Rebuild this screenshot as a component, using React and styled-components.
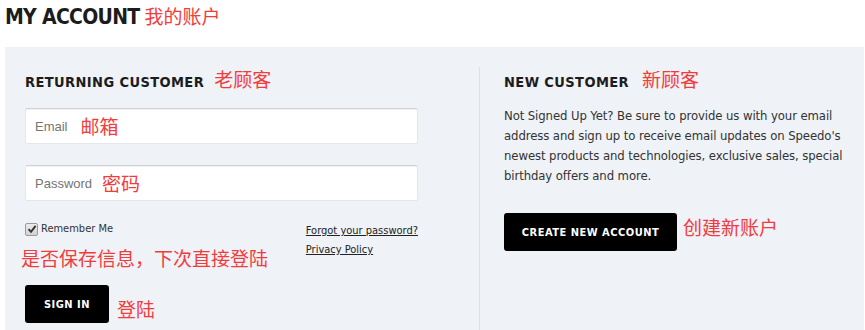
import React from "react";
import styled, { createGlobalStyle } from "styled-components";

const GlobalStyle = createGlobalStyle`
    html, body {
        margin: 0;
        padding: 0;
        background: #ffffff;
    }
    body {
        font-family: "DejaVu Sans Condensed", "Liberation Sans", sans-serif;
        color: #222222;
    }
`;

const narrow = `"DejaVu Sans Condensed", "Liberation Sans", sans-serif`;

// #region Styles

const Page = styled.div`
    padding: 0 1px 0 5px;
`;

const TitleRow = styled.div`
    display: flex;
    align-items: baseline;
    padding-top: 4px;
    margin-bottom: 17px;
    h1 {
        margin: 0;
        font-family: ${narrow};
        font-size: 21px;
        line-height: 26px;
        font-weight: 700;
        letter-spacing: -0.7px;
        color: #1c1c1c;
    }
`;

const Note = styled.span`
    font-family: "Noto Sans CJK SC", sans-serif;
    font-size: 19px;
    line-height: 24px;
    font-weight: 400;
    color: #f23c3c;
    white-space: nowrap;
    margin-left: ${(p) => p.$gap || 0}px;
`;

const Panel = styled.div`
    display: grid;
    grid-template-columns: 474px 1fr;
    background-color: #eff2f7;
    padding-top: 20px;
    min-height: 263px;
`;

const LeftCol = styled.div`
    padding: 0 61px 0 20px;
`;

const RightCol = styled.div`
    border-left: 1px solid #dde1e6;
    padding-left: 24px;
`;

const Heading = styled.div`
    display: flex;
    align-items: baseline;
    height: 20px;
    h2 {
        margin: 0;
        font-family: ${narrow};
        font-size: 14.5px;
        line-height: 20px;
        font-weight: 700;
        letter-spacing: 0.4px;
        color: #1c1c1c;
    }
`;

const Field = styled.div`
    display: flex;
    align-items: center;
    height: 36px;
    box-sizing: border-box;
    margin-top: ${(p) => p.$top}px;
    padding-left: 9px;
    background: #ffffff;
    border: 1px solid #e3e6ea;
    border-top-color: #cfd3d8;
    border-radius: 2px;
    box-shadow: inset 0 1px 1px rgba(0, 0, 0, 0.06);
`;

const Placeholder = styled.span`
    font-family: "Liberation Sans", Arial, sans-serif;
    font-size: 13px;
    color: #747474;
`;

const Options = styled.div`
    display: flex;
    justify-content: space-between;
    align-items: flex-start;
    margin-top: 20px;
`;

const RememberBlock = styled.div`
    display: flex;
    flex-direction: column;
`;

const Remember = styled.label`
    display: flex;
    align-items: center;
    gap: 3px;
    font-size: 11px;
    line-height: 16px;
    color: #333333;
`;

const CheckBox = styled.span`
    display: inline-flex;
    align-items: center;
    justify-content: center;
    width: 13px;
    height: 13px;
    box-sizing: border-box;
    border: 1px solid #9a9a9a;
    border-radius: 2px;
    background: linear-gradient(#ececec, #d2d2d2);
`;

const NoteLine = styled(Note)`
    display: block;
    margin: 9px 0 0 -4px;
`;

const Links = styled.div`
    display: flex;
    flex-direction: column;
    a {
        font-size: 11px;
        line-height: 19px;
        color: #222222;
        text-decoration: underline;
    }
`;

const ButtonRow = styled.div`
    display: flex;
    align-items: ${(p) => p.$align || "flex-end"};
    margin-top: ${(p) => p.$top}px;
    ${Note} {
        margin-top: ${(p) => (p.$align === "flex-start" ? 2 : 0)}px;
        margin-bottom: ${(p) => (p.$align === "flex-start" ? 0 : 2)}px;
    }
`;

const DarkButton = styled.button`
    height: 38px;
    width: ${(p) => p.$width}px;
    background: #000000;
    color: #ffffff;
    border: 0;
    border-radius: 3px;
    padding: 0;
    font-family: ${narrow};
    font-size: 11px;
    font-weight: 700;
    letter-spacing: 0.5px;
`;

const Paragraph = styled.p`
    margin: 19px 0 0 0;
    font-size: 13px;
    line-height: 20px;
    letter-spacing: -0.1px;
    color: #333333;
`;

// #endregion Styles

export default function App() {
    return (
        <>
            <GlobalStyle />
            <Page>
                <TitleRow>
                    <h1>MY ACCOUNT</h1>
                    <Note $gap={5}>我的账户</Note>
                </TitleRow>

                <Panel>
                    <LeftCol>
                        <Heading>
                            <h2>RETURNING CUSTOMER</h2>
                            <Note $gap={10}>老顾客</Note>
                        </Heading>

                        <Field $top={21}>
                            <Placeholder>Email</Placeholder>
                            <Note $gap={13}>邮箱</Note>
                        </Field>
                        <Field $top={21}>
                            <Placeholder>Password</Placeholder>
                            <Note $gap={10}>密码</Note>
                        </Field>

                        <Options>
                            <RememberBlock>
                                <Remember>
                                    <CheckBox>
                                        <svg width="10" height="10" viewBox="0 0 10 10">
                                            <path d="M1.5 5.2 L4 7.8 L8.6 1.8" fill="none" stroke="#333" strokeWidth="1.9" />
                                        </svg>
                                    </CheckBox>
                                    Remember Me
                                </Remember>
                                <NoteLine>是否保存信息，下次直接登陆</NoteLine>
                            </RememberBlock>
                            <Links>
                                <a href="#">Forgot your password?</a>
                                <a href="#">Privacy Policy</a>
                            </Links>
                        </Options>

                        <ButtonRow $top={15}>
                            <DarkButton $width={84}>SIGN IN</DarkButton>
                            <Note $gap={8}>登陆</Note>
                        </ButtonRow>
                    </LeftCol>

                    <RightCol>
                        <Heading>
                            <h2>NEW CUSTOMER</h2>
                            <Note $gap={13}>新顾客</Note>
                        </Heading>
                        <Paragraph>
                            Not Signed Up Yet? Be sure to provide us with your email<br />
                            address and sign up to receive email updates on Speedo's<br />
                            newest products and technologies, exclusive sales, special<br />
                            birthday offers and more.
                        </Paragraph>
                        <ButtonRow $top={27} $align="flex-start">
                            <DarkButton $width={173}>CREATE NEW ACCOUNT</DarkButton>
                            <Note $gap={6}>创建新账户</Note>
                        </ButtonRow>
                    </RightCol>
                </Panel>
            </Page>
        </>
    );
}
